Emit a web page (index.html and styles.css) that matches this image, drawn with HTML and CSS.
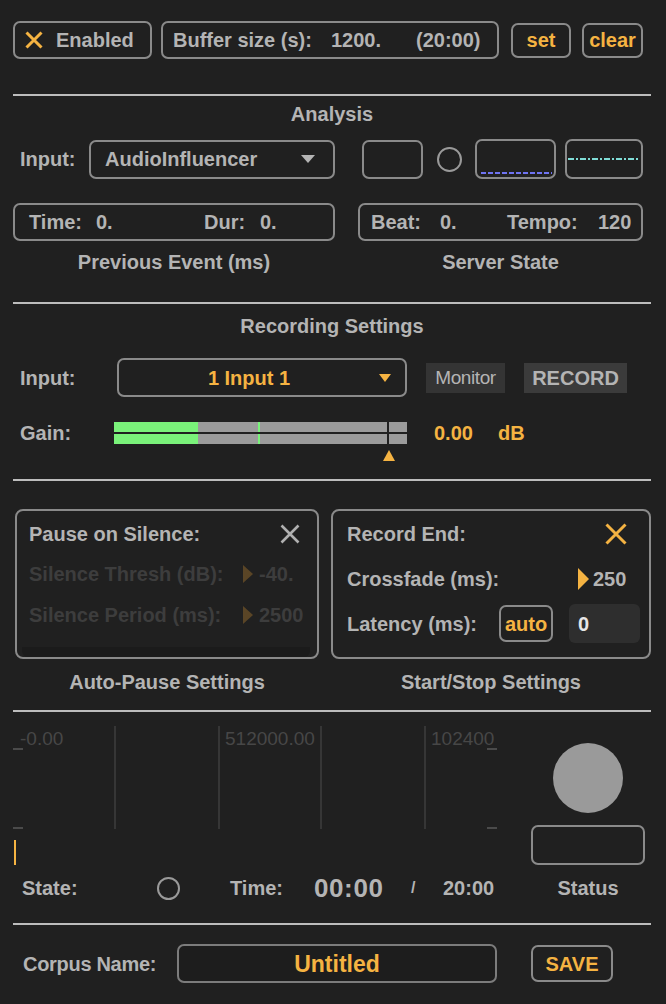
FILE: index.html
```html
<!DOCTYPE html>
<html>
<head>
<meta charset="utf-8">
<link rel="stylesheet" href="styles.css">
</head>
<body>
<div class="app">
  <div class="row toprow">
    <div class="box enabled">
      <svg class="xicon" viewBox="0 0 18 18"><path d="M1.5 1.5 L16.5 16.5 M16.5 1.5 L1.5 16.5" stroke="#f5b342" stroke-width="3" fill="none"/></svg>
      <span>Enabled</span>
    </div>
    <div class="box buffer">
      <span class="buf-lbl">Buffer size (s):</span>
      <span class="buf-num">1200.</span>
      <span>(20:00)</span>
    </div>
    <div class="box btn set">set</div>
    <div class="box btn clear">clear</div>
  </div>

  <div class="divider d1"></div>
  <div class="title t-analysis">Analysis</div>

  <div class="analysis">
    <div class="col-left">
      <div class="row inrow">
        <span class="in-lbl">Input:</span>
        <div class="box dropdown">
          <span class="dd-text">AudioInfluencer</span>
          <span class="tri-down grey"></span>
        </div>
      </div>
      <div class="box infobox time-box">
        <span class="w67">Time:</span><span class="w108">0.</span><span class="w56">Dur:</span><span>0.</span>
      </div>
      <div class="caption">Previous Event (ms)</div>
    </div>
    <div class="col-right">
      <div class="row inrow">
        <div class="box sbox1"></div>
        <div class="ring aring"></div>
        <div class="box sbox2"><div class="blue-dash"></div></div>
        <div class="box sbox3"><div class="cyan-dash"></div></div>
      </div>
      <div class="box infobox beat-box">
        <span class="w69">Beat:</span><span class="w67">0.</span><span class="w91">Tempo:</span><span>120</span>
      </div>
      <div class="caption">Server State</div>
    </div>
  </div>

  <div class="divider d2"></div>
  <div class="title t-rec">Recording Settings</div>

  <div class="row recrow">
    <span class="rec-lbl">Input:</span>
    <div class="box dropdown rec-dd">
      <span class="dd-center">1 Input 1</span>
      <span class="tri-down orange"></span>
    </div>
    <div class="flatbtn monitor">Monitor</div>
    <div class="flatbtn record">RECORD</div>
  </div>

  <div class="row gainrow">
    <span class="gain-lbl">Gain:</span>
    <div class="meter">
      <div class="bar"><div class="fill"></div><div class="peak"></div><div class="mark"></div></div>
      <div class="bar"><div class="fill"></div><div class="peak"></div><div class="mark"></div></div>
      <div class="thumb"></div>
    </div>
    <span class="orange gain-val">0.00</span>
    <span class="orange">dB</span>
  </div>

  <div class="divider d3"></div>

  <div class="row panels">
    <div class="box panel pause">
      <div class="row phead">
        <span>Pause on Silence:</span>
        <svg class="px grey-x" viewBox="0 0 20 20"><path d="M1.5 1.5 L18.5 18.5 M18.5 1.5 L1.5 18.5" stroke="#b0b0b0" stroke-width="2.6" fill="none"/></svg>
      </div>
      <div class="row prow dim r1">
        <span class="plbl">Silence Thresh (dB):</span><span class="tri-right dimtri"></span><span class="pval">-40.</span>
      </div>
      <div class="row prow dim r2">
        <span class="plbl">Silence Period (ms):</span><span class="tri-right dimtri"></span><span class="pval">2500</span>
      </div>
      <div class="strip"></div>
    </div>
    <div class="box panel recend">
      <div class="row phead">
        <span>Record End:</span>
        <svg class="px2" viewBox="0 0 22 22"><path d="M1.5 1.5 L20.5 20.5 M20.5 1.5 L1.5 20.5" stroke="#f5b342" stroke-width="3" fill="none"/></svg>
      </div>
      <div class="row prow cross">
        <span class="clbl">Crossfade (ms):</span><span class="tri-right otri"></span><span class="cval">250</span>
      </div>
      <div class="row prow lat">
        <span class="llbl">Latency (ms):</span>
        <div class="box auto orange">auto</div>
        <div class="numbox">0</div>
      </div>
    </div>
  </div>
  <div class="row panel-caps">
    <div class="caption cap-l">Auto-Pause Settings</div>
    <div class="caption cap-r">Start/Stop Settings</div>
  </div>

  <div class="divider d4"></div>

  <div class="row wavesec">
    <div class="wave-col">
      <div class="wave">
        <div class="vl" style="left:101px"></div>
        <div class="vl" style="left:205px"></div>
        <div class="vl" style="left:307px"></div>
        <div class="vl" style="left:411px"></div>
        <span class="wl" style="left:7px">-0.00</span>
        <span class="wl" style="left:212px">512000.00</span>
        <span class="wl" style="left:418px">102400</span>
        <div class="tick tl"></div>
        <div class="tick bl"></div>
        <div class="tick tr"></div>
        <div class="tick br"></div>
      </div>
      <div class="cursor"></div>
      <div class="row staterow">
        <span class="st-lbl">State:</span>
        <div class="ring sring"></div>
        <span class="tm-lbl">Time:</span>
        <span class="bigtime">00:00</span>
        <span class="slash">/</span>
        <span>20:00</span>
      </div>
    </div>
    <div class="status-col">
      <div class="bigdot"></div>
      <div class="box statusbox"></div>
      <div class="caption status-cap">Status</div>
    </div>
  </div>

  <div class="divider d5"></div>

  <div class="row corpus">
    <span class="corp-lbl">Corpus Name:</span>
    <div class="box namebox">Untitled</div>
    <div class="box savebtn">SAVE</div>
  </div>
</div>
</body>
</html>
```

FILE: styles.css
```css
* { box-sizing: border-box; }
html, body { margin: 0; padding: 0; background: #202020; }
body {
  font-family: "Liberation Sans", Arial, Helvetica, sans-serif;
  font-weight: 700;
  font-size: 20px;
  line-height: 24px;
  color: #b4b4b4;
}
.app { width: 666px; height: 1004px; padding: 21px 15px 0 13px; overflow: hidden; }
.row { display: flex; align-items: center; }
.row > * { flex-shrink: 0; }
.box { border: 2px solid #8a8a8a; border-radius: 7px; }
.orange { color: #f5b342; }

/* top */
.toprow { height: 38px; }
.enabled { width: 139px; height: 38px; display: flex; align-items: center; padding-left: 10px; }
.xicon { width: 18px; height: 18px; margin-right: 13px; }
.buffer { width: 338px; height: 38px; margin-left: 9px; display: flex; align-items: center; padding-left: 10px; }
.buf-lbl { width: 158px; }
.buf-num { width: 85px; }
.btn { height: 35px; display: flex; align-items: center; justify-content: center; color: #f5b342; }
.set { width: 60px; margin-left: 12px; }
.clear { width: 61px; margin-left: 11px; }

.divider { height: 2px; background: #bdbdbd; }
.d1 { margin-top: 35px; }
.title { text-align: center; }
.t-analysis { margin-top: 6px; }

/* analysis */
.analysis { display: flex; margin-top: 13px; }
.col-left { width: 322px; }
.col-right { width: 285px; margin-left: 23px; }
.inrow { height: 40px; }
.in-lbl { width: 76px; padding-left: 7px; }
.dropdown { width: 246px; height: 39px; display: flex; align-items: center; padding: 0 18px 0 14px; }
.dd-text { flex: 1; }
.tri-down { width: 0; height: 0; border-left: 7.5px solid transparent; border-right: 7.5px solid transparent; border-top: 8px solid #b4b4b4; }
.tri-down.orange { border-top-color: #f5b342; border-left-width: 6.5px; border-right-width: 6.5px; }
.infobox { height: 38px; margin-top: 24px; display: flex; align-items: center; }
.time-box { padding-left: 14px; }
.beat-box { padding-left: 11px; }
.w67 { width: 67px; }
.w108 { width: 108px; }
.w56 { width: 56px; }
.w69 { width: 69px; }
.w91 { width: 91px; }
.caption { text-align: center; margin-top: 9px; }
.sbox1 { width: 61px; height: 39px; margin-left: 4px; }
.ring { border: 2.5px solid #9a9a9a; border-radius: 50%; }
.aring { width: 25px; height: 25px; margin-left: 14px; }
.sbox2 { width: 81px; height: 40px; margin-left: 13px; position: relative; }
.blue-dash { position: absolute; left: 4px; right: 2px; bottom: 3px; height: 2px;
  background: repeating-linear-gradient(to right, #6f74f2 0 5px, transparent 5px 7px); }
.sbox3 { width: 78px; height: 40px; margin-left: 9px; position: relative; }
.cyan-dash { position: absolute; left: 1px; right: 1px; top: 17px; height: 2px;
  background: repeating-linear-gradient(to right, #7fdcd6 0 6px, transparent 6px 8px, #7fdcd6 8px 10px, transparent 10px 12px); }

.d2 { margin-top: 28px; }
.t-rec { margin-top: 10px; }

/* recording */
.recrow { height: 39px; margin-top: 20px; }
.rec-lbl { width: 104px; padding-left: 7px; }
.rec-dd { width: 290px; padding: 0 14px 0 0; color: #f5b342; }
.dd-center { flex: 1; text-align: center; }
.flatbtn { height: 30px; display: flex; align-items: center; justify-content: center; }
.monitor { width: 79px; margin-left: 19px; background: #343434; font-weight: 400; font-size: 19px; letter-spacing: -0.4px; }
.record { width: 103px; margin-left: 19px; background: #3b3b3b; }

.gainrow { height: 21px; margin-top: 25px; }
.gain-lbl { width: 101px; padding-left: 7px; }
.meter { position: relative; width: 293px; display: flex; flex-direction: column; gap: 2px; }
.bar { position: relative; height: 10px; background: #9b9b9b; }
.fill { position: absolute; left: 0; top: 0; bottom: 0; width: 84px; background: #7af27a; }
.peak { position: absolute; left: 144px; top: 0; bottom: 0; width: 2px; background: #7af27a; }
.mark { position: absolute; left: 273px; top: 0; bottom: 0; width: 2px; background: #202020; }
.thumb { position: absolute; left: 269px; top: 28px; width: 0; height: 0;
  border-left: 6px solid transparent; border-right: 6px solid transparent; border-bottom: 11px solid #f5b342; }
.gain-val { margin-left: 27px; width: 64px; }

.d3 { margin-top: 36px; }

/* panels */
.panels { margin-top: 28px; align-items: stretch; }
.panel { height: 150px; border-radius: 8px; display: flex; flex-direction: column; }
.pause { width: 304px; margin-left: 2px; padding: 11px 17px 0 12px; }
.recend { width: 320px; margin-left: 12px; padding: 11px 9px 0 14px; }
.recend .phead { padding-right: 13px; }
.phead { height: 24px; justify-content: space-between; }
.px { width: 20px; height: 20px; }
.px2 { width: 22px; height: 22px; }
.prow { height: 24px; }
.dim { color: #3d3d3d; }
.r1 { margin-top: 16px; }
.r2 { margin-top: 17px; }
.plbl { width: 214px; }
.tri-right { width: 0; height: 0; border-top: 9px solid transparent; border-bottom: 9px solid transparent; border-left: 10px solid #f5b342; }
.dimtri { border-left-color: #5a4526; }
.pval { margin-left: 6px; }
.strip { margin: auto -10px 0 -7px; height: 10px; background: #1b1b1b; border-radius: 0 0 6px 6px; }
.cross { margin-top: 21px; }
.clbl { width: 231px; }
.otri { border-top-width: 11px; border-bottom-width: 11px; border-left-width: 11px; }
.cval { margin-left: 4px; }
.lat { height: 39px; margin-top: 13px; }
.llbl { width: 152px; }
.auto { width: 54px; height: 37px; display: flex; align-items: center; justify-content: center; }
.numbox { width: 71px; height: 39px; margin-left: 16px; background: #2e2e2e; border-radius: 6px; padding-left: 9px; display: flex; align-items: center; color: #e6e6e6; }

.panel-caps { margin-top: 11px; }
.panel-caps .caption { margin-top: 0; }
.cap-l { width: 304px; margin-left: 2px; }
.cap-r { width: 320px; margin-left: 12px; }

.d4 { margin-top: 16px; }

/* wave */
.wavesec { align-items: flex-start; }
.wave-col { width: 484px; }
.wave { position: relative; height: 104px; margin-top: 14px; overflow: hidden; }
.vl { position: absolute; top: 0; bottom: 1px; width: 2px; background: #363636; }
.wl { position: absolute; top: 1px; font-weight: 400; font-size: 19px; color: #474747; white-space: nowrap; }
.tick { position: absolute; width: 10px; height: 2px; background: #4a4a4a; }
.tl { left: 0; top: 22px; }
.bl { left: 0; top: 101px; }
.tr { right: 0; top: 22px; }
.br { right: 0; top: 101px; }
.cursor { width: 2px; height: 25px; margin: 10px 0 0 1px; background: #f5b342; }
.staterow { height: 24px; margin-top: 11px; }
.st-lbl { width: 144px; padding-left: 9px; }
.sring { width: 23px; height: 23px; border-width: 2px; }
.tm-lbl { margin-left: 50px; width: 84px; }
.bigtime { font-size: 26px; letter-spacing: 0.6px; width: 97px; }
.slash { font-size: 16px; width: 32px; }
.status-col { width: 114px; margin-left: 34px; display: flex; flex-direction: column; align-items: center; }
.bigdot { width: 70px; height: 70px; border-radius: 50%; background: #9a9a9a; margin-top: 31px; }
.statusbox { width: 114px; height: 40px; margin-top: 12px; }
.status-cap { margin-top: 11px; }

.d5 { margin-top: 23px; }

/* corpus */
.corpus { height: 39px; margin-top: 19px; }
.corp-lbl { width: 164px; padding-left: 10px; letter-spacing: -0.3px; }
.namebox { width: 320px; height: 39px; display: flex; align-items: center; justify-content: center; color: #f5b342; font-size: 23px; background: #1d1d1d; border-color: #7c7c7c; }
.savebtn { width: 82px; height: 37px; margin-left: 34px; display: flex; align-items: center; justify-content: center; color: #f5b342; }
```
